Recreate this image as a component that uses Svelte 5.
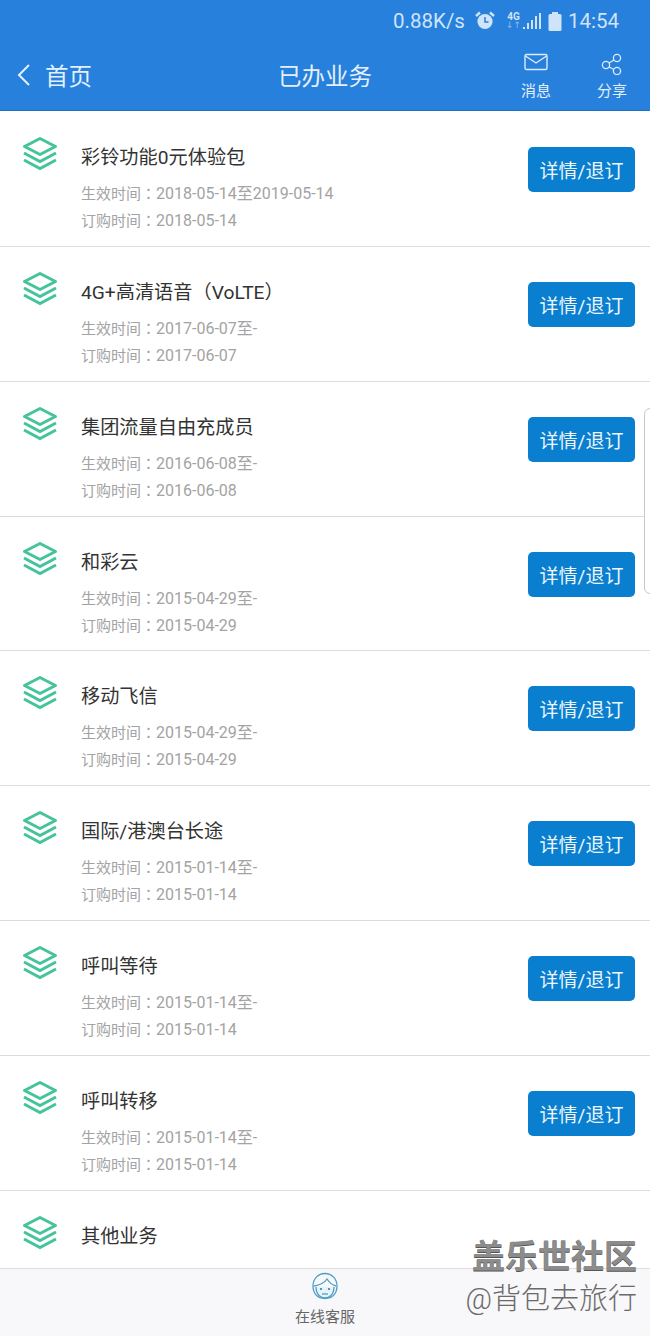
<script>
  const items = [
    { name: '彩铃功能0元体验包', start: '2018-05-14至2019-05-14', order: '2018-05-14' },
    { name: '4G+高清语音（VoLTE）', start: '2017-06-07至-', order: '2017-06-07' },
    { name: '集团流量自由充成员', start: '2016-06-08至-', order: '2016-06-08' },
    { name: '和彩云', start: '2015-04-29至-', order: '2015-04-29' },
    { name: '移动飞信', start: '2015-04-29至-', order: '2015-04-29' },
    { name: '国际/港澳台长途', start: '2015-01-14至-', order: '2015-01-14' },
    { name: '呼叫等待', start: '2015-01-14至-', order: '2015-01-14' },
    { name: '呼叫转移', start: '2015-01-14至-', order: '2015-01-14' }
  ];
</script>

{#snippet stack()}
  <svg class="stack" width="36" height="36" viewBox="0 0 36 36" fill="none" stroke="#45c39b" stroke-width="3">
    <path d="M18 3.5 L33.5 11.5 L18 19.5 L2.5 11.5 Z" stroke-linejoin="round" />
    <path d="M2 18 L18 26.5 L34 18" />
    <path d="M2 25 L18 33.5 L34 25" />
  </svg>
{/snippet}

<div class="page">
  <header>
    <div class="status">
      <span class="speed">0.88K/s</span>
      <svg class="alarm" width="20" height="20" viewBox="0 0 20 20">
        <circle cx="10" cy="10.5" r="7.6" fill="#cfe4f8" />
        <path d="M10 6 V11 H13.5" fill="none" stroke="#2780dc" stroke-width="1.5" />
        <path d="M1 5 L5 1.5 M19 5 L15 1.5" stroke="#cfe4f8" stroke-width="2.4" />
      </svg>
      <span class="net">
        <span class="g4">4G</span>
        <span class="arrows">↓↑</span>
      </span>
      <svg class="signal" width="19" height="18" viewBox="0 0 19 18" fill="#cfe4f8">
        <rect x="0" y="15" width="2" height="2" />
        <rect x="4" y="11" width="2" height="6" />
        <rect x="8" y="8" width="2" height="9" />
        <rect x="12" y="4" width="2" height="13" />
        <rect x="16" y="1" width="2" height="16" />
      </svg>
      <svg class="battery" width="14" height="19" viewBox="0 0 14 19" fill="#cfe4f8">
        <rect x="4" y="0" width="6" height="2" />
        <rect x="0.5" y="2" width="13" height="17" rx="1.5" />
      </svg>
      <span class="clock">14:54</span>
    </div>
    <div class="bar">
      <div class="back">
        <svg width="16" height="24" viewBox="0 0 16 24" fill="none" stroke="#e3f0fc" stroke-width="2">
          <path d="M13 2 L3 12 L13 22" />
        </svg>
        <span>首页</span>
      </div>
      <h1>已办业务</h1>
      <div class="actions">
        <div class="action">
          <svg width="24" height="18" viewBox="0 0 24 18" fill="none" stroke="#dcecfb" stroke-width="1.4">
            <rect x="1" y="1.5" width="22" height="15" rx="1.5" />
            <path d="M1.5 3 L12 10 L22.5 3" />
          </svg>
          <span>消息</span>
        </div>
        <div class="action">
          <svg width="22" height="22" viewBox="0 0 22 22" fill="none" stroke="#dcecfb" stroke-width="1.3">
            <circle cx="16" cy="5" r="3.6" />
            <circle cx="5" cy="12" r="3.6" />
            <circle cx="16" cy="18" r="3.6" />
            <path d="M8 10 L13 7 M8 14 L13 16.5" />
          </svg>
          <span>分享</span>
        </div>
      </div>
    </div>
  </header>

  <main>
    {#each items as item}
      <section class="row">
        {@render stack()}
        <div class="info">
          <h2>{item.name}</h2>
          <p><span class="label">生效时间<span class="colon">：</span></span>{item.start}</p>
          <p><span class="label">订购时间<span class="colon">：</span></span>{item.order}</p>
        </div>
        <button>详情/退订</button>
      </section>
    {/each}
    <section class="row last">
      {@render stack()}
      <div class="info">
        <h2>其他业务</h2>
      </div>
    </section>
  </main>

  <footer>
    <svg width="28" height="30" viewBox="0 0 28 30" fill="none" stroke="#4d9fc4" stroke-width="1.3">
      <path d="M14 1.5 C7 1.5 2 7 2 14 C2 21 6 26.5 14 26.5 C22 26.5 26 21 26 14 C26 7 21 1.5 14 1.5 Z" />
      <path d="M3 14 C9 13 14 10 16 7 C18 10 21 13 25 14" />
      <path d="M5 15 C5 23 10 26 14 26 C18 26 23 23 23 15" fill="#e6f3f8" />
      <circle cx="10" cy="17" r="1.1" fill="#2f7f9f" stroke="none" />
      <circle cx="18" cy="17" r="1.1" fill="#2f7f9f" stroke="none" />
      <path d="M11 22 H17" />
    </svg>
    <span>在线客服</span>
  </footer>

  <div class="handle"></div>
  <div class="mark">
    <div class="m1">盖乐世社区</div>
    <div class="m2">@背包去旅行</div>
  </div>
</div>

<style>
  :global(body) {
    margin: 0;
    background: #fff;
  }

  .page {
    position: relative;
    width: 650px;
    height: 1336px;
    overflow: hidden;
    display: flex;
    flex-direction: column;
    font-family: "Roboto", "Noto Sans CJK SC", sans-serif;
  }

  header {
    height: 111px;
    flex: none;
    background: #2780dc;
    color: #e3f0fc;
    box-sizing: border-box;
    border-bottom: 1px solid #1f6fc0;
  }

  .status {
    height: 42px;
    display: flex;
    align-items: center;
    justify-content: flex-end;
    padding-right: 31px;
    color: #cfe4f8;
  }

  .speed,
  .clock {
    font-size: 20.5px;
  }

  .alarm {
    margin-left: 10px;
  }

  .net {
    margin-left: 11px;
    width: 15px;
    display: flex;
    flex-direction: column;
    align-items: center;
    line-height: 9px;
  }

  .g4 {
    font-size: 10px;
    font-weight: 700;
  }

  .arrows {
    font-size: 9px;
    color: #8dbcea;
    font-family: "DejaVu Sans", sans-serif;
  }

  .signal {
    margin-left: 2px;
  }

  .battery {
    margin-left: 6px;
  }

  .clock {
    margin-left: 6px;
  }

  .bar {
    position: relative;
    height: 68px;
    display: flex;
    align-items: center;
    justify-content: space-between;
    padding: 0 23px 0 16px;
  }

  .back {
    display: flex;
    align-items: center;
    gap: 13px;
    font-size: 23.5px;
    margin-top: -2px;
  }

  h1 {
    position: absolute;
    left: 0;
    right: 0;
    top: 20px;
    margin: 0;
    text-align: center;
    font-size: 23.5px;
    line-height: 30px;
    font-weight: 400;
  }

  .actions {
    display: flex;
    gap: 46px;
    align-self: flex-start;
    margin-top: 11px;
  }

  .action {
    display: flex;
    flex-direction: column;
    align-items: center;
    width: 30px;
    height: 48px;
    justify-content: space-between;
    font-size: 15px;
    line-height: 20px;
  }

  .action svg {
    flex: none;
  }

  main {
    flex: 1;
    min-height: 0;
    padding-top: 1px;
  }

  .row {
    height: 134.85px;
    box-sizing: border-box;
    border-bottom: 1px solid #dcdcdc;
    display: flex;
    align-items: flex-start;
    padding: 23px 15px 0 22px;
  }

  .row.last {
    border-bottom: 0;
  }

  .stack {
    flex: none;
    margin-right: 23px;
  }

  .info {
    flex: 1;
    min-width: 0;
  }

  h2 {
    margin: 10px 0 8px;
    font-size: 19.2px;
    line-height: 26px;
    font-weight: 400;
    color: #333;
  }

  p {
    margin: 0;
    height: 27px;
    font-size: 16px;
    line-height: 27px;
    color: #a3a3a3;
  }

  .label {
    font-size: 15px;
  }

  .colon {
    font-family: "Noto Sans CJK TC", sans-serif;
  }

  button {
    flex: none;
    width: 107px;
    height: 45px;
    margin-top: 12px;
    border: 0;
    border-radius: 5px;
    padding: 0;
    background: #0a7fd0;
    color: #eef7fd;
    font-family: inherit;
    font-size: 19px;
  }

  footer {
    position: absolute;
    left: 0;
    right: 0;
    bottom: 0;
    height: 68px;
    box-sizing: border-box;
    border-top: 1px solid #dedede;
    background: #f8f7fa;
    display: flex;
    flex-direction: column;
    align-items: center;
    padding-top: 3px;
    color: #666;
    font-size: 15px;
    line-height: 20px;
    gap: 5px;
  }

  footer svg {
    flex: none;
  }

  .handle {
    position: absolute;
    left: 644px;
    top: 408px;
    width: 12px;
    height: 186px;
    box-sizing: border-box;
    border: 1px solid #c8c8c8;
    border-radius: 8px;
    background: #fff;
  }

  .mark {
    position: absolute;
    right: 13px;
    top: 1238px;
    text-align: right;
  }

  .m1 {
    font-size: 33px;
    line-height: 38px;
    font-weight: 700;
    color: #8c8c8c;
    text-shadow: 0 1px 0 #555;
  }

  .m2 {
    font-size: 29px;
    line-height: 40px;
    margin-top: 3px;
    color: #6a6a6a;
    font-weight: 300;
  }
</style>
